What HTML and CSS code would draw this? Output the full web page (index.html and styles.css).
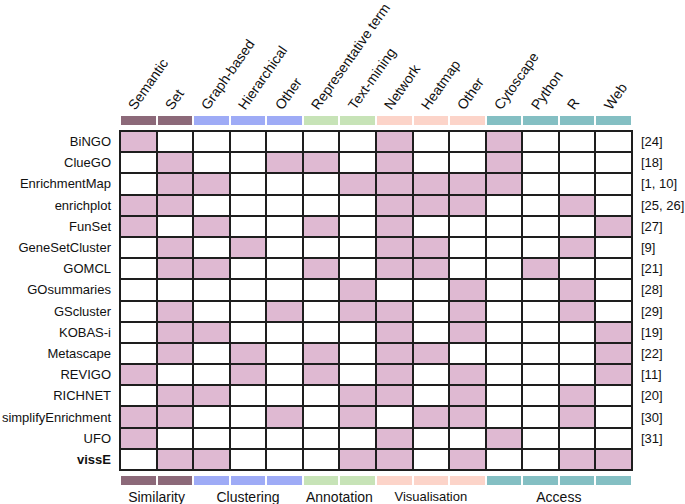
FILE: index.html
```html
<!DOCTYPE html>
<html>
<head>
<meta charset="utf-8">
<link rel="stylesheet" href="styles.css">
</head>
<body>
<div class="fig">
  <div class="heads">
    <div class="h"><span>Semantic</span></div>
    <div class="h"><span>Set</span></div>
    <div class="h"><span>Graph-based</span></div>
    <div class="h"><span>Hierarchical</span></div>
    <div class="h"><span>Other</span></div>
    <div class="h"><span>Representative term</span></div>
    <div class="h"><span>Text-mining</span></div>
    <div class="h"><span>Network</span></div>
    <div class="h"><span>Heatmap</span></div>
    <div class="h"><span>Other</span></div>
    <div class="h"><span>Cytoscape</span></div>
    <div class="h"><span>Python</span></div>
    <div class="h"><span>R</span></div>
    <div class="h"><span>Web</span></div>
  </div>
  <div class="bars top">
    <i class="sim"></i><i class="sim"></i><i class="clu"></i><i class="clu"></i><i class="clu"></i><i class="ann"></i><i class="ann"></i><i class="vis"></i><i class="vis"></i><i class="vis"></i><i class="acc"></i><i class="acc"></i><i class="acc"></i><i class="acc"></i>
  </div>
  <div class="main">
    <div class="names">
      <div>BiNGO</div><div>ClueGO</div><div>EnrichmentMap</div><div>enrichplot</div><div>FunSet</div><div>GeneSetCluster</div><div>GOMCL</div><div>GOsummaries</div><div>GScluster</div><div>KOBAS-i</div><div>Metascape</div><div>REVIGO</div><div>RICHNET</div><div>simplifyEnrichment</div><div>UFO</div><div class="bold">vissE</div>
    </div>
    <div class="grid" id="grid"></div>
    <div class="refs">
      <div>[24]</div><div>[18]</div><div>[1, 10]</div><div>[25, 26]</div><div>[27]</div><div>[9]</div><div>[21]</div><div>[28]</div><div>[29]</div><div>[19]</div><div>[22]</div><div>[11]</div><div>[20]</div><div>[30]</div><div>[31]</div><div></div>
    </div>
  </div>
  <div class="bars bottom">
    <i class="sim"></i><i class="sim"></i><i class="clu"></i><i class="clu"></i><i class="clu"></i><i class="ann"></i><i class="ann"></i><i class="vis"></i><i class="vis"></i><i class="vis"></i><i class="acc"></i><i class="acc"></i><i class="acc"></i><i class="acc"></i>
  </div>
  <div class="groups">
    <div class="g g-sim">Similarity</div>
    <div class="g g-clu">Clustering</div>
    <div class="g g-ann">Annotation</div>
    <div class="g g-vis">Visualisation</div>
    <div class="g g-acc">Access</div>
  </div>
</div>
<script src="script.js"></script>
</body>
</html>
```
FILE: styles.css
```css
* { box-sizing: border-box; }
html, body { margin: 0; padding: 0; background: #fff; }
body {
  width: 685px;
  height: 504px;
  overflow: hidden;
  font-family: "Liberation Sans", Arial, sans-serif;
  color: #111;
}
.fig { display: flex; flex-direction: column; }

.heads {
  margin-left: 119px;
  width: 514px;
  height: 116px;
  display: grid;
  grid-template-columns: repeat(14, 1fr);
  gap: 2px;
  padding: 0 2px;
}
.h { position: relative; }
.h span {
  position: absolute;
  left: calc(50% - 1px);
  bottom: 4px;
  font-size: 14px;
  line-height: 14px;
  white-space: nowrap;
  transform-origin: 0 100%;
  transform: rotate(-55deg);
}

.bars {
  margin-left: 119px;
  width: 514px;
  height: 9px;
  display: grid;
  grid-template-columns: repeat(14, 1fr);
  gap: 2px;
  padding: 0 2px;
}
.bars i { display: block; }
.bars.bottom { margin-top: 5px; }
.sim { background: #8c6979; }
.clu { background: #9eabf6; }
.ann { background: #c7e3b7; }
.vis { background: #fcd4c9; }
.acc { background: #84bfc3; }

.main { display: flex; margin-top: 5px; height: 341px; }
.names {
  width: 111px;
  margin-right: 8px;
  display: grid;
  grid-template-rows: repeat(16, 1fr);
  gap: 2px;
  padding: 2px 0;
  font-size: 13px;
  text-align: right;
}
.names div, .refs div { display: flex; align-items: center; justify-content: flex-end; white-space: nowrap; }
.refs div { justify-content: flex-start; }
.names .bold { font-weight: bold; }
.refs {
  padding-left: 8px;
  display: grid;
  grid-template-rows: repeat(16, 1fr);
  gap: 2px;
  padding-top: 2px;
  padding-bottom: 2px;
  font-size: 13px;
}

.grid {
  width: 514px;
  height: 341px;
  background: #1e1e1e;
  display: grid;
  grid-template-columns: repeat(14, 1fr);
  grid-template-rows: repeat(16, 1fr);
  gap: 2px;
  padding: 2px;
}
.cell { background: #fff; }
.cell.on { background: #dfb9d2; }

.groups {
  margin-left: 119px;
  width: 514px;
  margin-top: 4px;
  display: grid;
  grid-template-columns: repeat(14, 1fr);
  gap: 2px;
  padding: 0 2px;
  font-size: 14px;
  line-height: 16px;
}
.g { text-align: center; white-space: nowrap; }
.g-sim { grid-column: 1 / 3; }
.g-clu { grid-column: 3 / 6; }
.g-ann { grid-column: 6 / 8; }
.g-vis { grid-column: 8 / 11; font-size: 13px; }
.g-acc { grid-column: 11 / 15; }
```
FILE: script.js
```js
var data = [
  [0,7,10],
  [1,4,5,7,10],
  [1,2,6,7,8,9,10],
  [0,1,7,8,9,12],
  [0,2,5,7,13],
  [1,3,7,8,12],
  [1,2,5,7,8,11],
  [6,9,12],
  [1,4,6,7,9,12],
  [1,2,7,9,13],
  [1,3,5,7,8,13],
  [0,3,5,7,9,13],
  [1,2,6,7,9,12],
  [0,1,4,6,8,9,12],
  [0,7,10],
  [1,2,6,7,9,12,13]
];
var grid = document.getElementById('grid');
data.forEach(function (row) {
  for (var c = 0; c < 14; c++) {
    var d = document.createElement('div');
    d.className = 'cell' + (row.indexOf(c) >= 0 ? ' on' : '');
    grid.appendChild(d);
  }
});
```
